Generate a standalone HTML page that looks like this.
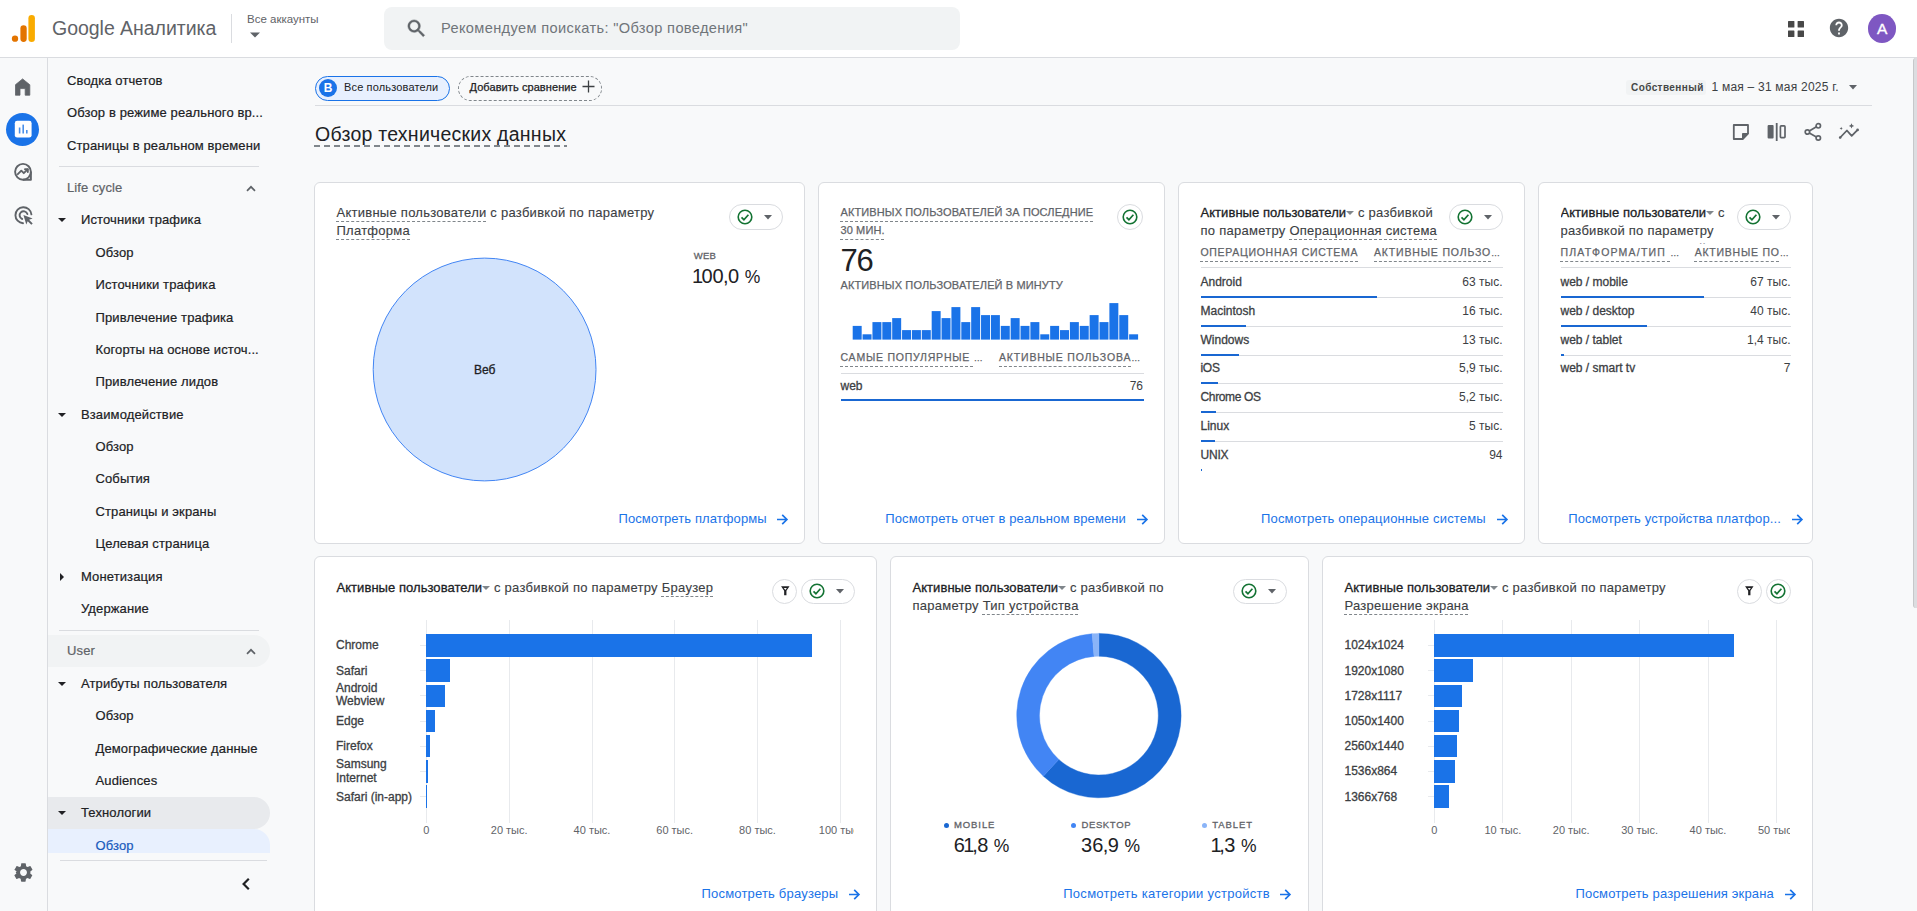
<!DOCTYPE html>
<html lang="ru">
<head>
<meta charset="utf-8">
<title>Google Аналитика</title>
<style>
*{box-sizing:border-box;margin:0;padding:0}
html,body{width:1917px;height:911px;overflow:hidden;background:#f8f9fa;font-family:"Liberation Sans",sans-serif;color:#202124}
.abs{position:absolute}
#hdr{position:absolute;left:0;top:0;width:1917px;height:58px;background:#fff;border-bottom:1px solid #dadce0}
#rail{position:absolute;left:0;top:58px;width:48px;height:853px;background:#f8f9fa;border-right:1px solid #dadce0}
#nav{position:absolute;left:48px;top:58px;width:224px;height:853px;background:#f8f9fa}
.t{position:absolute;white-space:nowrap;line-height:1}
.ni{position:absolute;white-space:nowrap;font-size:13px;line-height:16px;color:#202124;letter-spacing:0.12px;-webkit-text-stroke:0.2px}
.card{position:absolute;background:#fff;border:1px solid #dadce0;border-radius:6px}
.ct{position:absolute;font-size:13px;line-height:18px;color:#3c4043;white-space:nowrap;letter-spacing:0.26px;-webkit-text-stroke:0.12px #3c4043}
.du{text-decoration:underline dashed #80868b 1px;text-underline-offset:4px}
.lnk{position:absolute;font-size:13px;color:#1a73e8;white-space:nowrap;line-height:16px;letter-spacing:0.15px}
.th{position:absolute;font-size:10.5px;line-height:14px;color:#5f6368;letter-spacing:0.8px;white-space:nowrap}
.row{position:absolute;font-size:12px;line-height:14px;color:#3c4043;white-space:nowrap}
.ax{position:absolute;font-size:11px;line-height:12px;color:#5f6368;white-space:nowrap}
.md{color:#202124;-webkit-text-stroke:0.300px #202124;letter-spacing:0.05px}
.rb{-webkit-text-stroke:0.3px #3c4043;letter-spacing:0}
.dd{display:inline-block;width:0;height:0;border-left:4px solid transparent;border-right:4px solid transparent;border-top:4.500px solid #80868b;vertical-align:middle;margin:0 0 1px 0}
.du2{text-decoration:underline dashed #80868b 1px;text-underline-offset:5px}
.caps{-webkit-text-stroke:0.250px #5f6368}
.th{-webkit-text-stroke:0.250px #5f6368;height:20px}
.lg{font-size:9.5px;line-height:12px;color:#5f6368;-webkit-text-stroke:0.3px #5f6368}
.big{font-size:20px;line-height:24px;color:#202124}
.n1{margin:0 -1.7px 0 -1.5px}
.nc{margin:0 -0.600px}
.np{font-size:17.5px}
</style>
</head>
<body>
<div id="hdr">
<svg class="abs" style="left:10px;top:13px" width="28" height="32" viewBox="10 13 28 32">
<circle cx="15" cy="38.7" r="3.15" fill="#e37400"/>
<rect x="20.4" y="25.3" width="6.3" height="16.6" rx="3.15" fill="#e37400"/>
<rect x="28.4" y="15.1" width="6.5" height="26.8" rx="3.25" fill="#f9ab00"/>
</svg>
<div class="t" id="gname" style="left:52px;top:17px;font-size:19.5px;line-height:22px;color:#5f6368;letter-spacing:-0.03px">Google Аналитика</div>
<div class="abs" style="left:231px;top:14px;width:1px;height:29px;background:#dadce0"></div>
<div class="t" id="acc" style="left:247px;top:12px;font-size:11.5px;line-height:14px;color:#5f6368">Все аккаунты</div>
<svg class="abs" style="left:249px;top:32px" width="12" height="6" viewBox="0 0 12 6"><path d="M1 0.5h10l-5 5z" fill="#5f6368"/></svg>
<div class="abs" style="left:384px;top:7px;width:576px;height:43px;border-radius:8px;background:#f1f3f4"></div>
<svg class="abs" style="left:405px;top:17px" width="23" height="23" viewBox="0 0 24 24"><path fill="#5f6368" stroke="#5f6368" stroke-width="0.5" d="M15.5 14h-.79l-.28-.27A6.471 6.471 0 0 0 16 9.5 6.5 6.5 0 1 0 9.500 16c1.610 0 3.090-.590 4.230-1.570l.27.280v.790l5 4.990L20.490 19l-4.990-5zm-6 0C7.010 14 5 11.990 5 9.500S7.010 5 9.500 5 14 7.010 14 9.500 11.990 14 9.500 14z"/></svg>
<div class="t" id="srch" style="left:441px;top:19px;font-size:14.6px;line-height:18px;color:#70757a;letter-spacing:0.36px">Рекомендуем поискать: "Обзор поведения"</div>
<svg class="abs" style="left:1788px;top:20.600px" width="16" height="16" viewBox="0 0 16 16"><g fill="#484848"><rect x="0" y="0" width="6.4" height="6.4" rx="0.5"/><rect x="9.6" y="0" width="6.4" height="6.4" rx="0.5"/><rect x="0" y="9.6" width="6.4" height="6.4" rx="0.5"/><rect x="9.600" y="9.600" width="6.400" height="6.400" rx="0.500"/></g></svg>
<svg class="abs" style="left:1828px;top:17px" width="22" height="22" viewBox="0 0 24 24"><path fill="#5f6368" d="M12 2C6.480 2 2 6.480 2 12s4.480 10 10 10 10-4.480 10-10S17.520 2 12 2zm1 17h-2v-2h2v2zm2.070-7.750l-.9.920C13.450 12.900 13 13.500 13 15h-2v-.5c0-1.100.450-2.100 1.170-2.830l1.240-1.260c.370-.360.590-.860.590-1.410 0-1.100-.9-2-2-2s-2 .9-2 2H8c0-2.210 1.790-4 4-4s4 1.790 4 4c0 .880-.360 1.680-.930 2.250z"/></svg>
<div class="abs" style="left:1868px;top:14px;width:28.400px;height:29px;border-radius:50%;background:#7e57c2;color:#fff;font-size:15.500px;line-height:30.500px;-webkit-text-stroke:0.350px #fff;text-align:center">A</div>
</div>
<div id="rail">
<svg class="abs" style="left:15px;top:20px" width="16" height="18" viewBox="0 0 16 18"><path fill="#5f6368" d="M0.400 17.200V6.800L7.600 0.900L14.800 6.800V17.200H10.200V10.600H5V17.200Z" stroke="#5f6368" stroke-width="0.8" stroke-linejoin="round"/></svg>
<div class="abs" style="left:6px;top:55px;width:33px;height:33px;border-radius:50%;background:#1a73e8"></div>
<svg class="abs" style="left:14px;top:62px" width="18" height="18" viewBox="0 0 18 18"><rect x="0.800" y="0.800" width="16.800" height="16.800" rx="2.400" fill="#fff"/><rect x="4.800" y="7.500" width="1.600" height="6" fill="#4a90ea"/><rect x="8.400" y="4.600" width="1.600" height="8.900" fill="#4a90ea"/><rect x="12" y="10" width="1.600" height="3.500" fill="#4a90ea"/></svg>
<svg class="abs" style="left:13.250px;top:104.300px" width="21" height="20" viewBox="0 0 21 20"><g fill="none" stroke="#5f6368" stroke-width="1.900"><circle cx="10" cy="9.800" r="7.900"/><path d="M17.900 9.800V17.700H10" stroke-linejoin="round"/><path d="M4.800 12.200L8.300 8.700L10.800 11.200L14.600 7.400" stroke-linecap="round" stroke-linejoin="round"/><path d="M12 7.200H14.800V10" stroke-linecap="round" stroke-linejoin="round"/></g></svg>
<svg class="abs" style="left:14px;top:148px" width="21" height="20" viewBox="0 0 21 20"><g fill="none" stroke="#5f6368" stroke-width="1.900" stroke-linecap="round"><path d="M9 17.200A8 8 0 1 1 17.400 8.400"/><path d="M8.200 13A4 4 0 1 1 13.400 8"/></g><path fill="#5f6368" d="M9.400 9L18.600 12.400L15.100 13.800L18.700 17.400L17.300 18.800L13.700 15.200L12.300 18.600Z"/></svg>
<svg class="abs" style="left:12px;top:802.500px" width="23" height="23" viewBox="0 0 24 24"><path fill="#5f6368" d="M19.140 12.940c.040-.3.060-.610.060-.940 0-.320-.020-.640-.070-.940l2.030-1.580a.49.490 0 0 0 .12-.61l-1.920-3.320a.488.488 0 0 0-.59-.22l-2.390.96c-.5-.38-1.030-.7-1.620-.94l-.36-2.540a.484.484 0 0 0-.48-.41h-3.840c-.24 0-.43.170-.47.410l-.36 2.540c-.59.240-1.130.57-1.620.94l-2.390-.96c-.22-.08-.47 0-.59.220L2.740 8.870c-.12.210-.8.470.12.610l2.030 1.580c-.5.300-.9.630-.9.940s.2.640.7.940l-2.030 1.580a.49.490 0 0 0-.12.610l1.920 3.320c.12.220.37.290.59.220l2.390-.96c.5.380 1.030.7 1.620.94l.36 2.540c.5.240.24.410.48.410h3.840c.24 0 .44-.17.470-.41l.36-2.540c.59-.24 1.130-.56 1.620-.94l2.390.96c.22.080.47 0 .59-.22l1.920-3.320c.12-.22.070-.47-.12-.61l-2.010-1.580zM12 15.600c-1.980 0-3.600-1.620-3.600-3.600s1.620-3.600 3.600-3.600 3.600 1.620 3.600 3.600-1.620 3.600-3.600 3.600z"/></svg>
</div>
<div id="nav">
<div class="abs" style="left:0;top:577px;width:222px;height:32px;background:#f1f3f4;border-radius:0 16px 16px 0"></div>
<div class="abs" style="left:0;top:739px;width:222px;height:32px;background:#e8eaed;border-radius:0 16px 16px 0"></div>
<div class="abs" style="left:0;top:771px;width:222px;height:25px;background:#e8f0fe;border-radius:0 16px 0 0"></div>
<div class="ni" style="left:19px;top:15px;color:#202124;">Сводка отчетов</div>
<div class="ni" style="left:19px;top:47px;color:#202124;">Обзор в режиме реального вр...</div>
<div class="ni" style="left:19px;top:80px;color:#202124;">Страницы в реальном времени</div>
<div class="abs" style="left:11px;top:108px;width:200px;height:1px;background:#dadce0"></div>
<div class="ni" style="left:19px;top:122px;color:#5f6368;">Life cycle</div>
<svg class="abs" style="left:198px;top:127px" width="10" height="7" viewBox="0 0 10 7"><path d="M1 5.800L5 1.800L9 5.800" fill="none" stroke="#5f6368" stroke-width="1.700"/></svg>
<svg class="abs" style="left:10px;top:160px" width="8" height="4" viewBox="0 0 8 4"><path d="M0 0h8l-4 4z" fill="#202124"/></svg>
<div class="ni" style="left:33px;top:154px;color:#202124;">Источники трафика</div>
<div class="ni" style="left:47.5px;top:187px;color:#202124;">Обзор</div>
<div class="ni" style="left:47.5px;top:219px;color:#202124;">Источники трафика</div>
<div class="ni" style="left:47.5px;top:252px;color:#202124;">Привлечение трафика</div>
<div class="ni" style="left:47.5px;top:284px;color:#202124;">Когорты на основе источ...</div>
<div class="ni" style="left:47.5px;top:316px;color:#202124;">Привлечение лидов</div>
<svg class="abs" style="left:10px;top:355px" width="8" height="4" viewBox="0 0 8 4"><path d="M0 0h8l-4 4z" fill="#202124"/></svg>
<div class="ni" style="left:33px;top:349px;color:#202124;">Взаимодействие</div>
<div class="ni" style="left:47.5px;top:381px;color:#202124;">Обзор</div>
<div class="ni" style="left:47.5px;top:413px;color:#202124;">События</div>
<div class="ni" style="left:47.5px;top:446px;color:#202124;">Страницы и экраны</div>
<div class="ni" style="left:47.5px;top:478px;color:#202124;">Целевая страница</div>
<svg class="abs" style="left:12px;top:515px" width="4" height="8" viewBox="0 0 4 8"><path d="M0 0v8l4-4z" fill="#202124"/></svg>
<div class="ni" style="left:33px;top:511px;color:#202124;">Монетизация</div>
<div class="ni" style="left:33px;top:543px;color:#202124;">Удержание</div>
<div class="abs" style="left:11px;top:572px;width:200px;height:1px;background:#dadce0"></div>
<div class="ni" style="left:19px;top:585px;color:#5f6368;">User</div>
<svg class="abs" style="left:198px;top:590px" width="10" height="7" viewBox="0 0 10 7"><path d="M1 5.800L5 1.800L9 5.800" fill="none" stroke="#5f6368" stroke-width="1.700"/></svg>
<svg class="abs" style="left:10px;top:624px" width="8" height="4" viewBox="0 0 8 4"><path d="M0 0h8l-4 4z" fill="#202124"/></svg>
<div class="ni" style="left:33px;top:618px;color:#202124;">Атрибуты пользователя</div>
<div class="ni" style="left:47.5px;top:650px;color:#202124;">Обзор</div>
<div class="ni" style="left:47.5px;top:683px;color:#202124;">Демографические данные</div>
<div class="ni" style="left:47.5px;top:715px;color:#202124;">Audiences</div>
<svg class="abs" style="left:10px;top:753px" width="8" height="4" viewBox="0 0 8 4"><path d="M0 0h8l-4 4z" fill="#202124"/></svg>
<div class="ni" style="left:33px;top:747px;color:#202124;">Технологии</div>
<div class="ni" style="left:47.5px;top:780px;color:#185abc;">Обзор</div>
<div class="abs" style="left:0;top:794.600px;width:224px;height:59px;background:#f8f9fa"></div>
<div class="abs" style="left:12px;top:802px;width:207px;height:1px;background:#dadce0"></div>
<svg class="abs" style="left:193px;top:819px" width="10" height="14" viewBox="0 0 10 14"><path d="M7.800 1.800L2.600 7L7.800 12.200" fill="none" stroke="#202124" stroke-width="2.200"/></svg>
</div>
<div id="main">
<div class="abs" style="left:315px;top:76px;width:135px;height:25px;border:1.500px solid #1a73e8;border-radius:13px;background:#e8f0fe"></div>
<div class="abs" style="left:319px;top:78.800px;width:18px;height:18px;border-radius:50%;background:#1a73e8;color:#fff;font-size:12px;font-weight:700;line-height:18px;text-align:center">B</div>
<div class="t" style="left:344px;top:80px;font-size:11px;line-height:14px;color:#202124;letter-spacing:0.15px">Все пользователи</div>
<div class="abs" style="left:458px;top:76px;width:144px;height:25px;border:1px dashed #80868b;border-radius:13px"></div>
<div class="t" style="left:469.500px;top:80px;font-size:11px;line-height:14px;color:#202124;letter-spacing:0.08px;-webkit-text-stroke:0.250px #202124">Добавить сравнение</div>
<svg class="abs" style="left:582px;top:80px" width="13" height="13" viewBox="0 0 13 13"><path d="M6.500 0.500V12.500M0.500 6.500H12.500" stroke="#3c4043" stroke-width="1.300" fill="none"/></svg>
<div class="abs" style="left:1626px;top:80px;width:80px;height:15px;background:#f1f3f4;border-radius:3px"></div>
<div class="t" style="left:1631px;top:82px;font-size:10px;line-height:12px;font-weight:700;color:#444746;letter-spacing:0.420px">Собственный</div>
<div class="t" style="left:1711.500px;top:80px;font-size:12px;line-height:15px;color:#3c4043;letter-spacing:0.220px">1 мая – 31 мая 2025 г.</div>
<svg class="abs" style="left:1849px;top:85px" width="8" height="5" viewBox="0 0 8 5"><path d="M0 0h8l-4 4.500z" fill="#5f6368"/></svg>
<div class="abs" style="left:315px;top:105px;width:1557px;height:1px;background:#dadce0"></div>
<div class="t" id="ptitle" style="left:315px;top:122px;font-size:19.500px;line-height:24px;color:#202124;letter-spacing:0.250px">Обзор технических данных</div>
<div class="abs" style="left:314px;top:145px;width:253px;height:2px;background:repeating-linear-gradient(to right,#80868b 0 6px,transparent 6px 10px)"></div>
<svg class="abs" style="left:1732px;top:123px" width="18" height="18" viewBox="0 0 18 18"><path d="M1.800 2H16V10.700L10.700 16H1.800Z" fill="none" stroke="#5f6368" stroke-width="1.800" stroke-linejoin="round"/><path d="M16 10.500H10.500V16Z" fill="#5f6368" stroke="#5f6368" stroke-width="1" stroke-linejoin="round"/></svg>
<svg class="abs" style="left:1767px;top:122px" width="20" height="20" viewBox="0 0 20 20"><rect x="0.600" y="3" width="6" height="13.500" rx="1" fill="#5f6368"/><rect x="8.800" y="1" width="1.800" height="18" fill="#5f6368"/><rect x="13.400" y="3.900" width="4.600" height="11.700" rx="0.800" fill="none" stroke="#5f6368" stroke-width="1.700"/></svg>
<svg class="abs" style="left:1803px;top:122px" width="20" height="20" viewBox="0 0 20 20"><g fill="none" stroke="#5f6368" stroke-width="1.700"><circle cx="15.300" cy="3.800" r="2.200"/><circle cx="15.300" cy="16" r="2.200"/><circle cx="4.400" cy="10" r="2.200"/><path d="M6.300 9L13.400 4.800M6.300 11L13.400 15"/></g></svg>
<svg class="abs" style="left:1838px;top:121px" width="22" height="22" viewBox="0 0 22 22"><path d="M2.200 16.500L8.900 9.500L13.700 14.900L19.600 8.900" fill="none" stroke="#5f6368" stroke-width="1.800" stroke-linejoin="round" stroke-linecap="round"/><circle cx="2.200" cy="16.500" r="1.300" fill="#5f6368"/><circle cx="19.600" cy="8.900" r="1.300" fill="#5f6368"/><path d="M13.500 2.200l.8 1.900 1.900.8-1.900.8-.8 1.900-.8-1.900-1.900-.8 1.900-.8zM3.200 5.800l.5 1.100 1.100.5-1.100.5-.5 1.100-.5-1.100-1.100-.5 1.100-.5z" fill="#5f6368"/></svg>
<div class="card" style="left:314px;top:182px;width:491px;height:362px"></div>
<div class="card" style="left:818px;top:182px;width:347px;height:362px"></div>
<div class="card" style="left:1178px;top:182px;width:347px;height:362px"></div>
<div class="card" style="left:1538px;top:182px;width:275px;height:362px"></div>
<div class="card" style="left:314px;top:556px;width:563px;height:380px"></div>
<div class="card" style="left:890px;top:556px;width:419px;height:380px"></div>
<div class="card" style="left:1322px;top:556px;width:491px;height:380px"></div>
<div class="ct" style="left:336.500px;top:203.500px"><span class="du">Активные пользователи</span> с разбивкой по параметру<br><span class="du">Платформа</span></div>
<div class="abs" style="left:729px;top:204px;width:54px;height:26px;border:1px solid #dadce0;border-radius:13px;background:#fff"></div><svg class="abs" style="left:735.5px;top:208.0px" width="18" height="18" viewBox="0 0 18 18"><circle cx="9" cy="9" r="6.800" fill="none" stroke="#137333" stroke-width="1.600"/><path d="M5.500 9.400L7.900 11.700L12.400 6.700" fill="none" stroke="#137333" stroke-width="1.700"/></svg><svg class="abs" style="left:763.5px;top:214.7px" width="8" height="5" viewBox="0 0 8 5"><path d="M0 0h8l-4 4.500z" fill="#5f6368"/></svg>
<svg class="abs" style="left:371px;top:256px" width="228" height="228" viewBox="0 0 228 228"><circle cx="113.600" cy="113.500" r="111.400" fill="#d2e3fc" stroke="#4285f4" stroke-width="1"/></svg>
<div class="t" style="left:454.600px;top:362.500px;width:60px;text-align:center;font-size:12px;line-height:14px;color:#202124;-webkit-text-stroke:0.300px #202124">Веб</div>
<div class="t lg" style="left:693.800px;top:249.500px;letter-spacing:0.150px">WEB</div>
<div class="t big" style="left:693.500px;top:264px"><span class="n1">1</span>00<span class="nc">,</span>0 <span class="np">%</span></div>
<div class="lnk" style="left:618.5px;top:511px;letter-spacing:0.1px">Посмотреть платформы</div><svg class="abs" style="left:776.5px;top:513.5px" width="12" height="11" viewBox="0.800 0 12 11"><path d="M0.500 5.500H10.500M6 0.800L10.700 5.500L6 10.200" fill="none" stroke="#1a73e8" stroke-width="1.700"/></svg>
<div class="abs caps" style="left:840.500px;top:202.500px;font-size:11px;line-height:18.700px;color:#5f6368;letter-spacing:0.110px;white-space:nowrap"><span class="du2">АКТИВНЫХ ПОЛЬЗОВАТЕЛЕЙ ЗА ПОСЛЕДНИЕ</span><br><span class="du2">30 МИН.</span></div>
<div class="abs" style="left:1117.3px;top:204.0px;width:26px;height:26px;border:1px solid #dadce0;border-radius:13px;background:#fff"></div><svg class="abs" style="left:1121.3px;top:208px" width="18" height="18" viewBox="0 0 18 18"><circle cx="9" cy="9" r="6.800" fill="none" stroke="#137333" stroke-width="1.600"/><path d="M5.500 9.400L7.900 11.700L12.400 6.700" fill="none" stroke="#137333" stroke-width="1.700"/></svg>
<div class="t" style="left:840.500px;top:243px;font-size:31px;line-height:36px;color:#202124;letter-spacing:-1.300px">76</div>
<div class="t caps" style="left:840.500px;top:278px;font-size:11px;line-height:14px;color:#5f6368;letter-spacing:0.120px">АКТИВНЫХ ПОЛЬЗОВАТЕЛЕЙ В МИНУТУ</div>
<svg class="abs" style="left:852px;top:300px" width="290" height="40" viewBox="852 300 290 40"><g fill="#1a73e8"><rect x="852.70" y="325.9" width="8.97" height="13.7"/><rect x="862.57" y="334.3" width="8.97" height="5.3"/><rect x="872.44" y="322.1" width="8.97" height="17.5"/><rect x="882.32" y="322.1" width="8.97" height="17.5"/><rect x="892.19" y="318.1" width="8.97" height="21.5"/><rect x="902.06" y="330.1" width="8.97" height="9.5"/><rect x="911.93" y="330.1" width="8.97" height="9.5"/><rect x="921.81" y="330.1" width="8.97" height="9.5"/><rect x="931.68" y="311.1" width="8.97" height="28.5"/><rect x="941.55" y="318.1" width="8.97" height="21.5"/><rect x="951.42" y="307.1" width="8.97" height="32.5"/><rect x="961.30" y="322.1" width="8.97" height="17.5"/><rect x="971.17" y="307.1" width="8.97" height="32.5"/><rect x="981.04" y="315.1" width="8.97" height="24.5"/><rect x="990.91" y="315.1" width="8.97" height="24.5"/><rect x="1000.79" y="325.9" width="8.97" height="13.7"/><rect x="1010.66" y="318.1" width="8.97" height="21.5"/><rect x="1020.53" y="325.9" width="8.97" height="13.7"/><rect x="1030.40" y="322.1" width="8.97" height="17.5"/><rect x="1040.28" y="334.3" width="8.97" height="5.3"/><rect x="1050.15" y="325.9" width="8.97" height="13.7"/><rect x="1060.02" y="330.1" width="8.97" height="9.5"/><rect x="1069.89" y="322.1" width="8.97" height="17.5"/><rect x="1079.77" y="325.9" width="8.97" height="13.7"/><rect x="1089.64" y="315.1" width="8.97" height="24.5"/><rect x="1099.51" y="322.1" width="8.97" height="17.5"/><rect x="1109.38" y="303.1" width="8.97" height="36.5"/><rect x="1119.26" y="315.1" width="8.97" height="24.5"/><rect x="1129.13" y="334.3" width="8.97" height="5.3"/></g></svg>
<div class="th" style="left:840.5px;top:350px;letter-spacing:0.77px"><span class="du2">САМЫЕ ПОПУЛЯРНЫЕ&nbsp;</span><span style="letter-spacing:-0.5px;font-size:9px">…</span></div>
<div class="th" style="left:999px;top:350px;letter-spacing:0.825px"><span class="du2">АКТИВНЫЕ ПОЛЬЗОВА</span><span style="letter-spacing:-0.5px;font-size:9px">…</span></div>
<div class="abs" style="left:840.500px;top:373px;width:303.500px;height:1px;background:#dadce0"></div>
<div class="row rb" style="left:840.500px;top:378.500px">web</div>
<div class="row" style="left:1043px;width:100px;text-align:right;top:378.500px">76</div>
<div class="abs" style="left:840.500px;top:399px;width:303.500px;height:2px;background:#1967d2"></div>
<div class="lnk" style="left:885.3px;top:511px;letter-spacing:0.11px">Посмотреть отчет в реальном времени</div><svg class="abs" style="left:1136.5px;top:513.5px" width="12" height="11" viewBox="0.800 0 12 11"><path d="M0.500 5.500H10.500M6 0.800L10.700 5.500L6 10.200" fill="none" stroke="#1a73e8" stroke-width="1.700"/></svg>
<div class="ct" style="left:1200.500px;top:203.500px"><span class="md">Активные пользователи</span><span class="dd"></span> с разбивкой<br>по параметру <span class="du">Операционная система</span></div>
<div class="abs" style="left:1449px;top:204px;width:54px;height:26px;border:1px solid #dadce0;border-radius:13px;background:#fff"></div><svg class="abs" style="left:1455.5px;top:208.0px" width="18" height="18" viewBox="0 0 18 18"><circle cx="9" cy="9" r="6.800" fill="none" stroke="#137333" stroke-width="1.600"/><path d="M5.500 9.400L7.900 11.700L12.400 6.700" fill="none" stroke="#137333" stroke-width="1.700"/></svg><svg class="abs" style="left:1483.5px;top:214.7px" width="8" height="5" viewBox="0 0 8 5"><path d="M0 0h8l-4 4.500z" fill="#5f6368"/></svg>
<div class="th" style="left:1200.5px;top:245px;letter-spacing:0.7px"><span class="du2">ОПЕРАЦИОННАЯ СИСТЕМА</span></div>
<div class="th" style="left:1374px;top:245px;letter-spacing:0.836px"><span class="du2">АКТИВНЫЕ ПОЛЬЗО</span><span style="letter-spacing:-0.5px;font-size:9px">…</span></div>
<div class="abs" style="left:1200.500px;top:267px;width:302px;height:1px;background:#dadce0"></div>
<div class="row rb" style="left:1200.500px;top:274.8px">Android</div>
<div class="row" style="left:1402px;width:100.500px;text-align:right;top:274.8px">63 тыс.</div>
<div class="abs" style="left:1200.500px;top:296.8px;width:302px;height:1px;background:#dadce0"></div>
<div class="abs" style="left:1200.500px;top:295.8px;width:176.4px;height:2px;background:#1967d2"></div>
<div class="row rb" style="left:1200.500px;top:303.6px">Macintosh</div>
<div class="row" style="left:1402px;width:100.500px;text-align:right;top:303.6px">16 тыс.</div>
<div class="abs" style="left:1200.500px;top:325.6px;width:302px;height:1px;background:#dadce0"></div>
<div class="abs" style="left:1200.500px;top:324.6px;width:45.3px;height:2px;background:#1967d2"></div>
<div class="row rb" style="left:1200.500px;top:332.5px">Windows</div>
<div class="row" style="left:1402px;width:100.500px;text-align:right;top:332.5px">13 тыс.</div>
<div class="abs" style="left:1200.500px;top:354.5px;width:302px;height:1px;background:#dadce0"></div>
<div class="abs" style="left:1200.500px;top:353.5px;width:38.0px;height:2px;background:#1967d2"></div>
<div class="row rb" style="left:1200.500px;top:361.3px"><span style="letter-spacing:-0.3px">iOS</span></div>
<div class="row" style="left:1402px;width:100.500px;text-align:right;top:361.3px">5,9 тыс.</div>
<div class="abs" style="left:1200.500px;top:383.3px;width:302px;height:1px;background:#dadce0"></div>
<div class="abs" style="left:1200.500px;top:382.3px;width:17.5px;height:2px;background:#1967d2"></div>
<div class="row rb" style="left:1200.500px;top:390.1px"><span style="letter-spacing:-0.35px">Chrome OS</span></div>
<div class="row" style="left:1402px;width:100.500px;text-align:right;top:390.1px">5,2 тыс.</div>
<div class="abs" style="left:1200.500px;top:412.1px;width:302px;height:1px;background:#dadce0"></div>
<div class="abs" style="left:1200.500px;top:411.1px;width:15.3px;height:2px;background:#1967d2"></div>
<div class="row rb" style="left:1200.500px;top:418.9px">Linux</div>
<div class="row" style="left:1402px;width:100.500px;text-align:right;top:418.9px">5 тыс.</div>
<div class="abs" style="left:1200.500px;top:440.9px;width:302px;height:1px;background:#dadce0"></div>
<div class="abs" style="left:1200.500px;top:439.9px;width:14.0px;height:2px;background:#1967d2"></div>
<div class="row rb" style="left:1200.500px;top:447.8px"><span style="letter-spacing:-0.2px">UNIX</span></div>
<div class="row" style="left:1402px;width:100.500px;text-align:right;top:447.8px">94</div>
<div class="abs" style="left:1200.500px;top:468.8px;width:1.0px;height:2px;background:#1967d2"></div>
<div class="lnk" style="left:1261px;top:511px;letter-spacing:0.18px">Посмотреть операционные системы</div><svg class="abs" style="left:1496.5px;top:513.5px" width="12" height="11" viewBox="0.800 0 12 11"><path d="M0.500 5.500H10.500M6 0.800L10.700 5.500L6 10.200" fill="none" stroke="#1a73e8" stroke-width="1.700"/></svg>
<div class="ct" style="left:1560.500px;top:203.500px;height:40px;overflow:hidden"><span class="md">Активные пользователи</span><span class="dd"></span> с<br>разбивкой по параметру<br><span class="du">Платформа/Тип устройства</span></div>
<div class="abs" style="left:1737px;top:204px;width:54px;height:26px;border:1px solid #dadce0;border-radius:13px;background:#fff"></div><svg class="abs" style="left:1743.5px;top:208.0px" width="18" height="18" viewBox="0 0 18 18"><circle cx="9" cy="9" r="6.800" fill="none" stroke="#137333" stroke-width="1.600"/><path d="M5.500 9.400L7.900 11.700L12.400 6.700" fill="none" stroke="#137333" stroke-width="1.700"/></svg><svg class="abs" style="left:1771.5px;top:214.7px" width="8" height="5" viewBox="0 0 8 5"><path d="M0 0h8l-4 4.500z" fill="#5f6368"/></svg>
<div class="abs" style="left:1556px;top:245.500px;width:240px;height:18px;background:#fff"></div>
<div class="th" style="left:1560.5px;top:245px;letter-spacing:1.2px"><span class="du2">ПЛАТФОРМА/ТИП&nbsp;</span><span style="letter-spacing:-0.5px;font-size:9px">…</span></div>
<div class="th" style="left:1694.7px;top:245px;letter-spacing:0.77px"><span class="du2">АКТИВНЫЕ ПО</span><span style="letter-spacing:-0.5px;font-size:9px">…</span></div>
<div class="abs" style="left:1560.500px;top:267px;width:230px;height:1px;background:#dadce0"></div>
<div class="row rb" style="left:1560.500px;top:274.8px">web / mobile</div>
<div class="row" style="left:1690px;width:100.500px;text-align:right;top:274.8px">67 тыс.</div>
<div class="abs" style="left:1560.500px;top:296.8px;width:230px;height:1px;background:#dadce0"></div>
<div class="abs" style="left:1560.500px;top:295.8px;width:143.4px;height:2px;background:#1967d2"></div>
<div class="row rb" style="left:1560.500px;top:303.6px">web / desktop</div>
<div class="row" style="left:1690px;width:100.500px;text-align:right;top:303.6px">40 тыс.</div>
<div class="abs" style="left:1560.500px;top:325.6px;width:230px;height:1px;background:#dadce0"></div>
<div class="abs" style="left:1560.500px;top:324.6px;width:86.4px;height:2px;background:#1967d2"></div>
<div class="row rb" style="left:1560.500px;top:332.5px">web / tablet</div>
<div class="row" style="left:1690px;width:100.500px;text-align:right;top:332.5px">1,4 тыс.</div>
<div class="abs" style="left:1560.500px;top:354.5px;width:230px;height:1px;background:#dadce0"></div>
<div class="abs" style="left:1560.500px;top:353.5px;width:3.3px;height:2px;background:#1967d2"></div>
<div class="row rb" style="left:1560.500px;top:361.3px">web / smart tv</div>
<div class="row" style="left:1690px;width:100.500px;text-align:right;top:361.3px">7</div>
<div class="lnk" style="left:1568.3px;top:511px;letter-spacing:0.1px">Посмотреть устройства платфор...</div><svg class="abs" style="left:1791.5px;top:513.5px" width="12" height="11" viewBox="0.800 0 12 11"><path d="M0.500 5.500H10.500M6 0.800L10.700 5.500L6 10.200" fill="none" stroke="#1a73e8" stroke-width="1.700"/></svg>
<div class="ct" style="left:336.500px;top:578.500px"><span class="md">Активные пользователи</span><span class="dd"></span> с разбивкой по параметру <span class="du">Браузер</span></div>
<div class="abs" style="left:772.0px;top:579.0px;width:25px;height:25px;border:1px solid #dadce0;border-radius:13px;background:#fff"></div><svg class="abs" style="left:779.5px;top:585.1px" width="10.600" height="11.500" viewBox="0 0 12 12" preserveAspectRatio="none"><path d="M1.200 1.300H10.800L7.300 6V10.600H4.700V6Z" fill="#202124"/><path d="M4.300 3.100H7.700L6 5.300Z" fill="#fff"/></svg>
<div class="abs" style="left:801px;top:579px;width:54px;height:25px;border:1px solid #dadce0;border-radius:13px;background:#fff"></div><svg class="abs" style="left:807.5px;top:581.6px" width="18" height="18" viewBox="0 0 18 18"><circle cx="9" cy="9" r="6.800" fill="none" stroke="#137333" stroke-width="1.600"/><path d="M5.500 9.400L7.900 11.700L12.400 6.700" fill="none" stroke="#137333" stroke-width="1.700"/></svg><svg class="abs" style="left:835.5px;top:589.2px" width="8" height="5" viewBox="0 0 8 5"><path d="M0 0h8l-4 4.500z" fill="#5f6368"/></svg>
<div class="abs" style="left:315px;top:600px;width:538.5px;height:250px;overflow:hidden"><div class="abs" style="left:-315px;top:-600px">
<div class="abs" style="left:425.9px;top:619.500px;width:1px;height:203.500px;background:#e8eaed"></div><div class="abs" style="left:508.7px;top:619.500px;width:1px;height:203.500px;background:#e8eaed"></div><div class="abs" style="left:591.5px;top:619.500px;width:1px;height:203.500px;background:#e8eaed"></div><div class="abs" style="left:674.2px;top:619.500px;width:1px;height:203.500px;background:#e8eaed"></div><div class="abs" style="left:757.0px;top:619.500px;width:1px;height:203.500px;background:#e8eaed"></div><div class="abs" style="left:839.8px;top:619.500px;width:1px;height:203.500px;background:#e8eaed"></div><div class="abs" style="left:419.9px;top:645.0px;width:6px;height:1px;background:#e8eaed"></div><div class="abs" style="left:426.1px;top:634.0px;width:385.9px;height:22.6px;background:#1a73e8"></div><div class="abs" style="left:419.9px;top:670.2px;width:6px;height:1px;background:#e8eaed"></div><div class="abs" style="left:426.1px;top:659.3px;width:23.7px;height:22.3px;background:#1a73e8"></div><div class="abs" style="left:419.9px;top:695.4px;width:6px;height:1px;background:#e8eaed"></div><div class="abs" style="left:426.1px;top:685.0px;width:18.9px;height:22px;background:#1a73e8"></div><div class="abs" style="left:419.9px;top:720.6px;width:6px;height:1px;background:#e8eaed"></div><div class="abs" style="left:426.1px;top:710.0px;width:8.7px;height:22px;background:#1a73e8"></div><div class="abs" style="left:419.9px;top:745.8px;width:6px;height:1px;background:#e8eaed"></div><div class="abs" style="left:426.1px;top:735.0px;width:3.5px;height:22.3px;background:#1a73e8"></div><div class="abs" style="left:419.9px;top:771.0px;width:6px;height:1px;background:#e8eaed"></div><div class="abs" style="left:426.1px;top:760.2px;width:1.9px;height:22.5px;background:#1a73e8"></div><div class="abs" style="left:419.9px;top:796.2px;width:6px;height:1px;background:#e8eaed"></div><div class="abs" style="left:426.1px;top:785.4px;width:0.8px;height:22.2px;background:#1a73e8"></div><div class="row rb" style="left:336px;top:637.7px">Chrome</div><div class="row rb" style="left:336px;top:663.5px">Safari</div><div class="row rb" style="left:336px;top:681.8px;line-height:13.600px">Android<br>Webview</div><div class="row rb" style="left:336px;top:713.8px">Edge</div><div class="row rb" style="left:336px;top:738.8px">Firefox</div><div class="row rb" style="left:336px;top:758.0px;line-height:13.600px">Samsung<br>Internet</div><div class="row rb" style="left:336px;top:789.5px">Safari (in-app)</div><div class="ax" style="left:386.4px;width:80px;text-align:center;top:824px">0</div><div class="ax" style="left:469.2px;width:80px;text-align:center;top:824px">20 тыс.</div><div class="ax" style="left:552.0px;width:80px;text-align:center;top:824px">40 тыс.</div><div class="ax" style="left:634.7px;width:80px;text-align:center;top:824px">60 тыс.</div><div class="ax" style="left:717.5px;width:80px;text-align:center;top:824px">80 тыс.</div><div class="ax" style="left:800.3px;width:80px;text-align:center;top:824px">100 тыс.</div>
</div></div>
<div class="lnk" style="left:701.5px;top:886px;letter-spacing:0.19px">Посмотреть браузеры</div><svg class="abs" style="left:848.5px;top:888.5px" width="12" height="11" viewBox="0.800 0 12 11"><path d="M0.500 5.500H10.500M6 0.800L10.700 5.500L6 10.200" fill="none" stroke="#1a73e8" stroke-width="1.700"/></svg>
<div class="ct" style="left:912.500px;top:578.500px"><span class="md">Активные пользователи</span><span class="dd"></span> с разбивкой по<br>параметру <span class="du">Тип устройства</span></div>
<div class="abs" style="left:1233px;top:579px;width:54px;height:25px;border:1px solid #dadce0;border-radius:13px;background:#fff"></div><svg class="abs" style="left:1239.5px;top:581.6px" width="18" height="18" viewBox="0 0 18 18"><circle cx="9" cy="9" r="6.800" fill="none" stroke="#137333" stroke-width="1.600"/><path d="M5.500 9.400L7.900 11.700L12.400 6.700" fill="none" stroke="#137333" stroke-width="1.700"/></svg><svg class="abs" style="left:1267.5px;top:589.2px" width="8" height="5" viewBox="0 0 8 5"><path d="M0 0h8l-4 4.500z" fill="#5f6368"/></svg>
<svg class="abs" style="left:1010px;top:628px" width="180" height="176" viewBox="1010 628 180 176"><path d="M1098.90 633.40A82.2 82.2 0 1 1 1043.39 776.22L1058.79 759.41A59.4 59.4 0 1 0 1098.90 656.20Z" fill="#1967d2" stroke="#1967d2" stroke-width="0.400"/><path d="M1043.39 776.22A82.2 82.2 0 0 1 1092.19 633.67L1094.05 656.40A59.4 59.4 0 0 0 1058.79 759.41Z" fill="#4285f4" stroke="#4285f4" stroke-width="0.400"/><path d="M1092.19 633.67A82.2 82.2 0 0 1 1098.90 633.40L1098.90 656.20A59.4 59.4 0 0 0 1094.05 656.40Z" fill="#8ab4f8" stroke="#8ab4f8" stroke-width="0.400"/></svg>
<div class="abs" style="left:943.9px;top:823px;width:5px;height:5px;border-radius:50%;background:#1967d2"></div><div class="t lg" style="left:954px;top:818.500px;letter-spacing:0.9px">MOBILE</div><div class="t big" style="left:953.7px;top:833px">6<span class="n1">1</span><span class="nc">,</span>8 <span class="np">%</span></div>
<div class="abs" style="left:1071.1px;top:823px;width:5px;height:5px;border-radius:50%;background:#4285f4"></div><div class="t lg" style="left:1081.4px;top:818.500px;letter-spacing:0.65px">DESKTOP</div><div class="t big" style="left:1081.1000000000001px;top:833px">36<span class="nc">,</span>9 <span class="np">%</span></div>
<div class="abs" style="left:1202.1px;top:823px;width:5px;height:5px;border-radius:50%;background:#8ab4f8"></div><div class="t lg" style="left:1212.3px;top:818.500px;letter-spacing:0.9px">TABLET</div><div class="t big" style="left:1212.0px;top:833px"><span class="n1">1</span><span class="nc">,</span>3 <span class="np">%</span></div>
<div class="lnk" style="left:1063.2px;top:886px;letter-spacing:0.29px">Посмотреть категории устройств</div><svg class="abs" style="left:1280px;top:888.5px" width="12" height="11" viewBox="0.800 0 12 11"><path d="M0.500 5.500H10.500M6 0.800L10.700 5.500L6 10.200" fill="none" stroke="#1a73e8" stroke-width="1.700"/></svg>
<div class="ct" style="left:1344.500px;top:578.500px"><span class="md">Активные пользователи</span><span class="dd"></span> с разбивкой по параметру<br><span class="du">Разрешение экрана</span></div>
<div class="abs" style="left:1736.5px;top:579.0px;width:25px;height:25px;border:1px solid #dadce0;border-radius:13px;background:#fff"></div><svg class="abs" style="left:1744.0px;top:585.1px" width="10.600" height="11.500" viewBox="0 0 12 12" preserveAspectRatio="none"><path d="M1.200 1.300H10.800L7.300 6V10.600H4.700V6Z" fill="#202124"/><path d="M4.300 3.100H7.700L6 5.300Z" fill="#fff"/></svg>
<div class="abs" style="left:1765.5px;top:579.0px;width:25px;height:25px;border:1px solid #dadce0;border-radius:13px;background:#fff"></div><svg class="abs" style="left:1769px;top:581.8px" width="18" height="18" viewBox="0 0 18 18"><circle cx="9" cy="9" r="6.800" fill="none" stroke="#137333" stroke-width="1.600"/><path d="M5.500 9.400L7.900 11.700L12.400 6.700" fill="none" stroke="#137333" stroke-width="1.700"/></svg>
<div class="abs" style="left:1323px;top:600px;width:466.5px;height:250px;overflow:hidden"><div class="abs" style="left:-1323px;top:-600px">
<div class="abs" style="left:1433.9px;top:619.500px;width:1px;height:203.500px;background:#e8eaed"></div><div class="abs" style="left:1502.3px;top:619.500px;width:1px;height:203.500px;background:#e8eaed"></div><div class="abs" style="left:1570.7px;top:619.500px;width:1px;height:203.500px;background:#e8eaed"></div><div class="abs" style="left:1639.1px;top:619.500px;width:1px;height:203.500px;background:#e8eaed"></div><div class="abs" style="left:1707.5px;top:619.500px;width:1px;height:203.500px;background:#e8eaed"></div><div class="abs" style="left:1775.9px;top:619.500px;width:1px;height:203.500px;background:#e8eaed"></div><div class="abs" style="left:1427.9px;top:645.0px;width:6px;height:1px;background:#e8eaed"></div><div class="abs" style="left:1434.1px;top:634.0px;width:299.9px;height:22.6px;background:#1a73e8"></div><div class="abs" style="left:1427.9px;top:670.2px;width:6px;height:1px;background:#e8eaed"></div><div class="abs" style="left:1434.1px;top:659.3px;width:38.7px;height:22.3px;background:#1a73e8"></div><div class="abs" style="left:1427.9px;top:695.4px;width:6px;height:1px;background:#e8eaed"></div><div class="abs" style="left:1434.1px;top:685.0px;width:27.6px;height:22px;background:#1a73e8"></div><div class="abs" style="left:1427.9px;top:720.6px;width:6px;height:1px;background:#e8eaed"></div><div class="abs" style="left:1434.1px;top:710.0px;width:24.9px;height:22px;background:#1a73e8"></div><div class="abs" style="left:1427.9px;top:745.8px;width:6px;height:1px;background:#e8eaed"></div><div class="abs" style="left:1434.1px;top:735.0px;width:22.9px;height:22.3px;background:#1a73e8"></div><div class="abs" style="left:1427.9px;top:771.0px;width:6px;height:1px;background:#e8eaed"></div><div class="abs" style="left:1434.1px;top:760.2px;width:20.9px;height:22.5px;background:#1a73e8"></div><div class="abs" style="left:1427.9px;top:796.2px;width:6px;height:1px;background:#e8eaed"></div><div class="abs" style="left:1434.1px;top:785.4px;width:14.9px;height:22.2px;background:#1a73e8"></div><div class="row rb" style="left:1344.5px;top:637.7px">1024x1024</div><div class="row rb" style="left:1344.5px;top:663.5px">1920x1080</div><div class="row rb" style="left:1344.5px;top:688.6px">1728x1117</div><div class="row rb" style="left:1344.5px;top:713.8px">1050x1400</div><div class="row rb" style="left:1344.5px;top:738.8px">2560x1440</div><div class="row rb" style="left:1344.5px;top:764.2px">1536x864</div><div class="row rb" style="left:1344.5px;top:789.5px">1366x768</div><div class="ax" style="left:1394.4px;width:80px;text-align:center;top:824px">0</div><div class="ax" style="left:1462.8px;width:80px;text-align:center;top:824px">10 тыс.</div><div class="ax" style="left:1531.2px;width:80px;text-align:center;top:824px">20 тыс.</div><div class="ax" style="left:1599.6px;width:80px;text-align:center;top:824px">30 тыс.</div><div class="ax" style="left:1668.0px;width:80px;text-align:center;top:824px">40 тыс.</div><div class="ax" style="left:1736.4px;width:80px;text-align:center;top:824px">50 тыс.</div>
</div></div>
<div class="lnk" style="left:1575.5px;top:886px;letter-spacing:0.16px">Посмотреть разрешения экрана</div><svg class="abs" style="left:1784.5px;top:888.5px" width="12" height="11" viewBox="0.800 0 12 11"><path d="M0.500 5.500H10.500M6 0.800L10.700 5.500L6 10.200" fill="none" stroke="#1a73e8" stroke-width="1.700"/></svg>
<div class="abs" style="left:1908px;top:58px;width:9px;height:853px;background:#f8f9fa"></div>
<div class="abs" style="left:1913px;top:58px;width:8px;height:550px;background:#dcdde0;border-left:1px solid #c6c8ca;border-radius:3px"></div>
</div>
</body>
</html>
